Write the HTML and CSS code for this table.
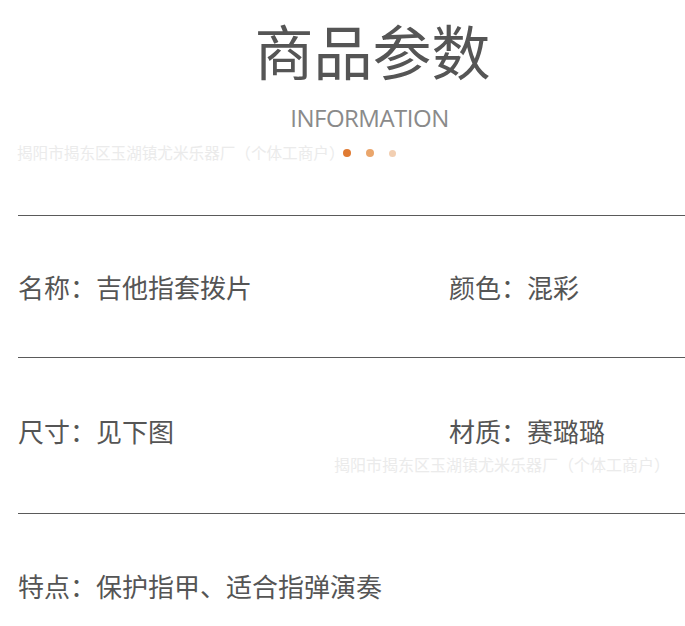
FILE: index.html
```html
<!DOCTYPE html>
<html lang="zh-CN">
<head>
<meta charset="utf-8">
<title>商品参数</title>
<link rel="stylesheet" href="styles.css">
</head>
<body>
<div class="page">
  <header class="header">
    <h1 class="title">商品参数</h1>
    <div class="subtitle">INFORMATION</div>
    <div class="dots">
      <span class="dot dot-1"></span>
      <span class="dot dot-2"></span>
      <span class="dot dot-3"></span>
    </div>
    <div class="watermark watermark-top">揭阳市揭东区玉湖镇尤米乐器厂（个体工商户）</div>
  </header>
  <section class="specs">
    <div class="row row-1">
      <div class="cell cell-left">名称：吉他指套拨片</div>
      <div class="cell">颜色：混彩</div>
    </div>
    <div class="row row-2">
      <div class="cell cell-left">尺寸：见下图</div>
      <div class="cell">材质：赛璐璐</div>
      <div class="watermark watermark-mid">揭阳市揭东区玉湖镇尤米乐器厂（个体工商户）</div>
    </div>
    <div class="row row-3">
      <div class="cell cell-left">特点：保护指甲、适合指弹演奏</div>
    </div>
  </section>
</div>
</body>
</html>
```

FILE: styles.css
```css
* { box-sizing: border-box; }
html, body {
  margin: 0;
  padding: 0;
  background: #ffffff;
}
body {
  font-family: "Noto Sans CJK SC", "Noto Sans", sans-serif;
  color: #555555;
}
.page {
  width: 685px;
  overflow: hidden;
}
.header {
  position: relative;
  height: 215px;
  padding: 20px 0 0 54px;
  text-align: center;
}
.title {
  margin: 0 0 0 6px;
  font-size: 59px;
  font-weight: 400;
  line-height: 59px;
  color: #555555;
}
.subtitle {
  margin-top: 27px;
  font-family: "Open Sans", "Noto Sans", sans-serif;
  font-size: 24px;
  line-height: 24px;
  color: #8a8a8a;
  letter-spacing: -0.5px;
}
.dots {
  position: relative;
  z-index: 1;
  display: flex;
  gap: 15px;
  margin-top: 19px;
  padding-left: 289px;
}
.dot {
  width: 8px;
  height: 8px;
  border-radius: 50%;
  box-shadow: 0 0 0 3px #ffffff;
}
.dot-1 { background: #e07b33; }
.dot-2 { background: #eaa66c; }
.dot-3 { width: 7px; height: 7px; margin-top: 0.5px; background: #f2cfb2; }
.watermark {
  position: absolute;
  font-size: 15.6px;
  line-height: 16px;
  color: #ebebeb;
  white-space: nowrap;
}
.watermark-top {
  left: 17px;
  top: 144px;
}
.specs {
  margin-left: 18px;
}
.row {
  position: relative;
  display: flex;
  border-top: 1px solid #5a5a5a;
  font-size: 26px;
  line-height: 36px;
  color: #555555;
}
.row-1 { padding: 53px 0 52px; }
.row-2 { padding: 55px 0 64px; }
.row-3 { padding: 54px 0 40px; }
.cell-left {
  width: 431px;
  flex: none;
}
.watermark-mid {
  left: 316px;
  top: 98px;
  font-size: 16px;
}
```
